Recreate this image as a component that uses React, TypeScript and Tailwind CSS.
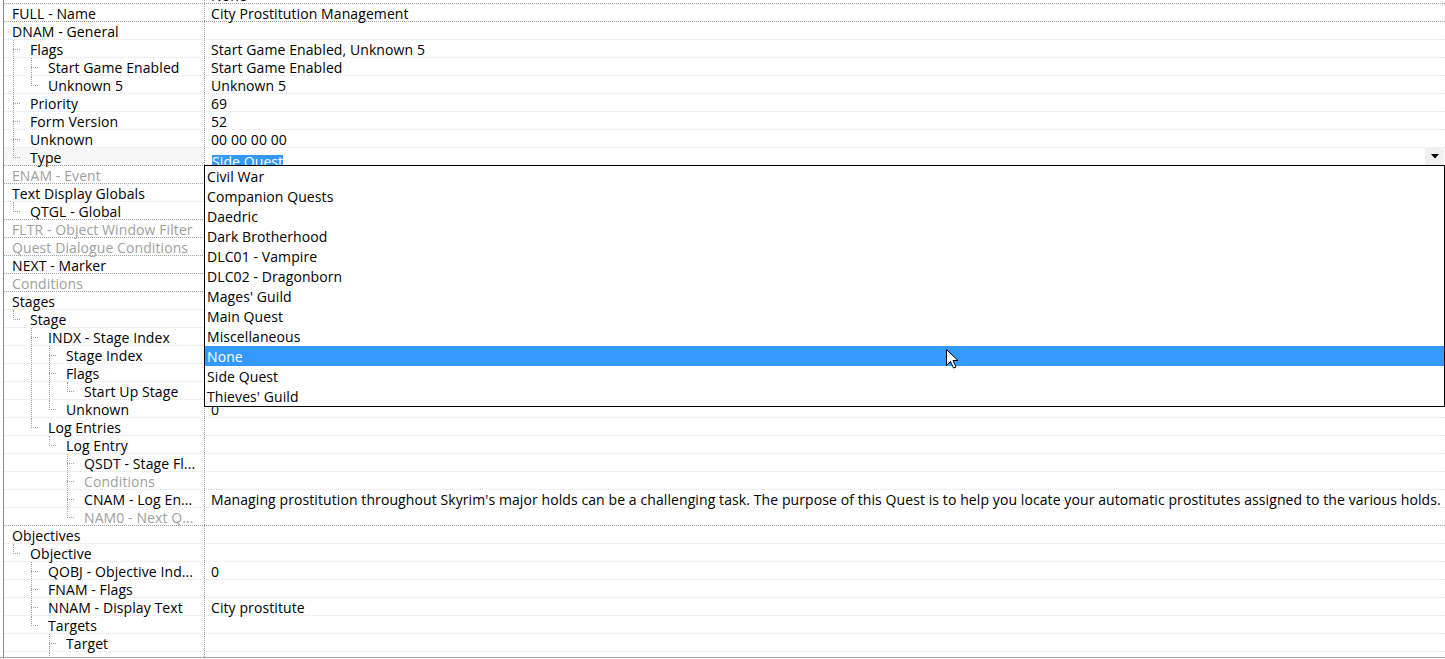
import React from 'react';

type Row = {
    label: string;
    level: number;
    value?: string;
    dim?: boolean;
    focused?: boolean;
};

const rows: Row[] = [
    { label: '', level: 0, value: 'None' },
    { label: 'FULL - Name', level: 0, value: 'City Prostitution Management' },
    { label: 'DNAM - General', level: 0 },
    { label: 'Flags', level: 1, value: 'Start Game Enabled, Unknown 5' },
    { label: 'Start Game Enabled', level: 2, value: 'Start Game Enabled' },
    { label: 'Unknown 5', level: 2, value: 'Unknown 5' },
    { label: 'Priority', level: 1, value: '69' },
    { label: 'Form Version', level: 1, value: '52' },
    { label: 'Unknown', level: 1, value: '00 00 00 00' },
    { label: 'Type', level: 1, focused: true },
    { label: 'ENAM - Event', level: 0, dim: true },
    { label: 'Text Display Globals', level: 0 },
    { label: 'QTGL - Global', level: 1 },
    { label: 'FLTR - Object Window Filter', level: 0, dim: true },
    { label: 'Quest Dialogue Conditions', level: 0, dim: true },
    { label: 'NEXT - Marker', level: 0 },
    { label: 'Conditions', level: 0, dim: true },
    { label: 'Stages', level: 0 },
    { label: 'Stage', level: 1 },
    { label: 'INDX - Stage Index', level: 2 },
    { label: 'Stage Index', level: 3 },
    { label: 'Flags', level: 3 },
    { label: 'Start Up Stage', level: 4 },
    { label: 'Unknown', level: 3, value: '0' },
    { label: 'Log Entries', level: 2 },
    { label: 'Log Entry', level: 3 },
    { label: 'QSDT - Stage Fl...', level: 4 },
    { label: 'Conditions', level: 4, dim: true },
    {
        label: 'CNAM - Log En...',
        level: 4,
        value: "Managing prostitution throughout Skyrim's major holds can be a challenging task. The purpose of this Quest is to help you locate your automatic prostitutes assigned to the various holds.",
    },
    { label: 'NAM0 - Next Q...', level: 4, dim: true },
    { label: 'Objectives', level: 0 },
    { label: 'Objective', level: 1 },
    { label: 'QOBJ - Objective Ind...', level: 2, value: '0' },
    { label: 'FNAM - Flags', level: 2 },
    { label: 'NNAM - Display Text', level: 2, value: 'City prostitute' },
    { label: 'Targets', level: 2 },
    { label: 'Target', level: 3 },
    // next target, scrolled out of view below the fold
    { label: '', level: 3 },
];

const questTypes = [
    'Civil War',
    'Companion Quests',
    'Daedric',
    'Dark Brotherhood',
    'DLC01 - Vampire',
    'DLC02 - Dragonborn',
    "Mages' Guild",
    'Main Quest',
    'Miscellaneous',
    'None',
    'Side Quest',
    "Thieves' Guild",
];

// x offset of the connector line for each depth, inside the name cell
const lineLeft = ['', 'left-[9px]', 'left-[27px]', 'left-[45px]', 'left-[63px]'];
const textPad = ['pl-[8px]', 'pl-[26px]', 'pl-[44px]', 'pl-[62px]', 'pl-[80px]'];

const hasNextSibling = (index: number, level: number) => {
    for (let j = index + 1; j < rows.length; j++) {
        if (rows[j].level < level) return false;
        if (rows[j].level === level) return true;
    }
    return false;
};

const TreeLines: React.FC<{ index: number }> = ({ index }) => {
    const level = rows[index].level;
    const parts: React.ReactNode[] = [];
    for (let k = 1; k <= level; k++) {
        const more = hasNextSibling(index, k);
        if (k === level) {
            parts.push(
                <div
                    key={`v${k}`}
                    className={`absolute top-0 border-l border-dotted border-[#a0a0a0] ${lineLeft[k]} ${more ? 'h-[17px]' : 'h-[10px]'}`}
                />
            );
            parts.push(
                <div key={`h${k}`} className={`absolute top-[9px] h-0 w-[7px] border-t border-dotted border-[#a0a0a0] ${lineLeft[k]}`} />
            );
        } else if (more) {
            parts.push(
                <div key={`v${k}`} className={`absolute top-0 h-[17px] border-l border-dotted border-[#a0a0a0] ${lineLeft[k]}`} />
            );
        }
    }
    return <>{parts}</>;
};

const TypeEditor: React.FC = () => (
    <div className="flex h-[17px] flex-1 items-start bg-white">
        <div className="flex-1 pl-[7px] pt-[3px]">
            <span className="inline-block h-[13px] bg-[#3399ff] leading-[13px] text-white">Side Quest</span>
        </div>
        <div className="mr-[1px] flex h-[17px] w-[19px] items-center justify-center bg-[#f0f0f0]">
            <svg width="8" height="5" viewBox="0 0 8 5">
                <path d="M0 0H8L4 4.5Z" fill="#000" />
            </svg>
        </div>
    </div>
);

const Cursor: React.FC = () => (
    <svg className="absolute left-[946px] top-[349px]" width="13" height="20" viewBox="0 0 13 20">
        <path
            d="M0.5 0.5V16.5L4.5 12.5L7.5 19L10 18L7 11.5H12Z"
            fill="#fff"
            stroke="#000"
            strokeWidth="1"
            strokeLinejoin="miter"
        />
    </svg>
);

export default function App() {
    return (
        <div
            className="relative h-[659px] w-[1445px] overflow-hidden bg-white text-[14px] tracking-[0.09px] text-black"
            style={{ fontFamily: '"Open Sans", "Noto Sans", sans-serif' }}
        >
            <div className="relative h-[658px] overflow-hidden border-b border-[#a0a0a0]">
                <div className="ml-[3px] mt-[-15px] border-l border-[#8a8a8a]">
                    {rows.map((row, i) => (
                        <div
                            key={i}
                            className={`flex h-[18px] border-t border-dotted ${row.level === 0 ? 'border-[#a0a0a0]' : 'border-[#e3e3e3]'}`}
                        >
                            <div
                                className={`relative h-[17px] w-[201px] shrink-0 border-r border-dotted border-[#a0a0a0] ${row.focused ? 'bg-[#f7f7f7]' : ''}`}
                            >
                                <TreeLines index={i} />
                                <div className={`whitespace-nowrap leading-[19px] ${textPad[row.level]} ${row.dim ? 'text-[#a0a0a0]' : ''}`}>
                                    {row.label}
                                </div>
                            </div>
                            {row.focused ? (
                                <TypeEditor />
                            ) : (
                                <div className="whitespace-nowrap pl-[6px] leading-[19px]">{row.value}</div>
                            )}
                        </div>
                    ))}
                </div>

                {/* open combo list for the Type field */}
                <div className="absolute left-[204px] top-[165px] w-[1241px] border border-black bg-white">
                    {questTypes.map(t => (
                        <div
                            key={t}
                            className={`h-[20px] whitespace-nowrap pl-[2px] leading-[22px] ${t === 'None' ? 'bg-[#3399ff] text-white' : ''}`}
                        >
                            {t}
                        </div>
                    ))}
                </div>

                <Cursor />
            </div>
        </div>
    );
}
